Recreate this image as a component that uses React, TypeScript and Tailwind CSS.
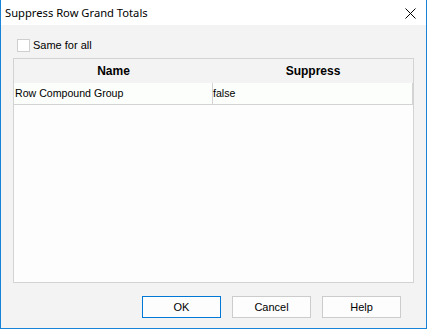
import React from "react";

export default function App() {
  return (
    <div className="w-[427px] h-[329px] flex flex-col bg-[#f3f3f3] border border-t-0 border-[#1883d7] text-[11px] text-black" style={{ fontFamily: '"Liberation Sans", Arial, sans-serif' }}>
      <div className="h-[25px] bg-white flex items-center justify-between pl-[4px] pr-[10px] shrink-0">
        <span className="leading-none text-[11.2px]" style={{ fontFamily: '"Noto Sans", sans-serif' }}>Suppress Row Grand Totals</span>
        <svg width="11" height="11" viewBox="0 0 11 11" className="mt-[1px]">
          <path d="M0.5 0.5 L10.5 10.5 M10.5 0.5 L0.5 10.5" stroke="#000" strokeWidth="1" />
        </svg>
      </div>
      <div className="flex flex-col flex-1 px-[12px]">
        <div className="flex items-center gap-[3px] pl-[4px] mt-[13px] h-[14px]">
          <div className="w-[13px] h-[13px] border border-[#cfcfcf] bg-white" />
          <span className="leading-none">Same for all</span>
        </div>
        <div className="mt-[6px] h-[225px] border border-[#d3d3d3] bg-[#fcfdfc] flex flex-col">
          <div className="h-[24px] bg-[#f3f3f3] flex font-bold text-[12px] items-center">
            <div className="w-[199px] text-center">Name</div>
            <div className="flex-1 text-center">Suppress</div>
          </div>
          <div className="h-[22px] flex border-b border-[#d3d3d3] bg-[#fbfefb] border-r border-r-[#d3d3d3] text-[10.6px]">
            <div className="w-[199px] border-r border-[#d3d3d3] flex items-center pl-[1px]">Row Compound Group</div>
            <div className="flex-1 flex items-center">false</div>
          </div>
        </div>
        <div className="flex justify-end gap-[11px] mt-[13px] pr-[13px]">
          <button className="w-[79px] h-[22px] border border-[#0078d7] bg-[#fdfdfd] leading-none">OK</button>
          <button className="w-[79px] h-[22px] border border-[#cccccc] bg-[#fdfdfd] leading-none">Cancel</button>
          <button className="w-[79px] h-[22px] border border-[#cccccc] bg-[#fdfdfd] leading-none">Help</button>
        </div>
      </div>
    </div>
  );
}
